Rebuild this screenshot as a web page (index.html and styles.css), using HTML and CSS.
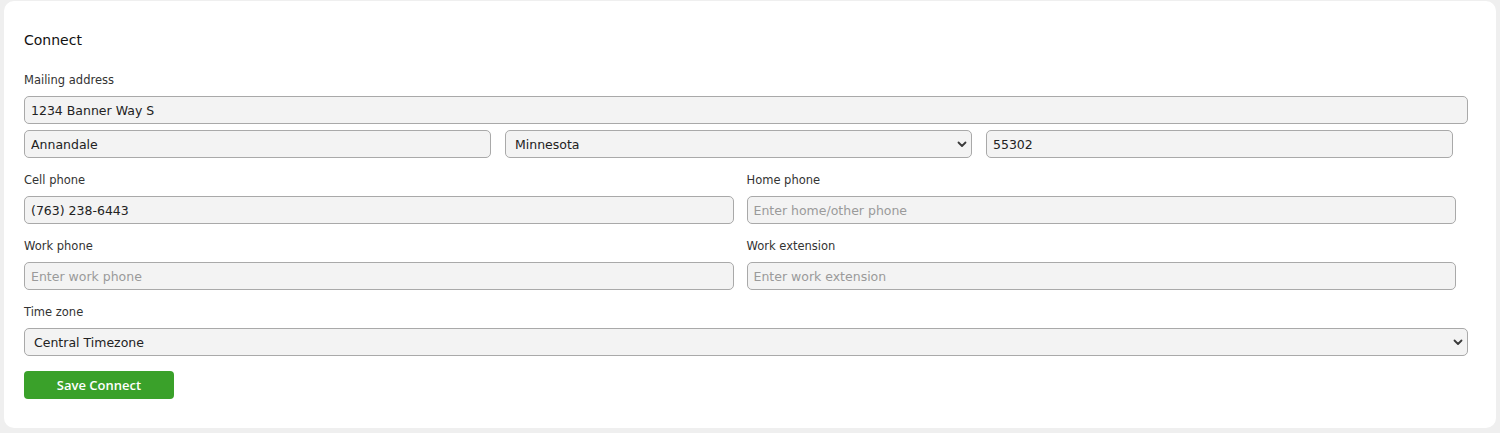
FILE: index.html
```html
<!DOCTYPE html>
<html>
<head>
<meta charset="utf-8">
<link rel="stylesheet" href="styles.css">
</head>
<body>
<div class="page">
  <section class="card">
    <h2 class="title">Connect</h2>
    <div class="field">
      <label class="label">Mailing address</label>
      <input class="control full" type="text" value="1234 Banner Way S">
      <div class="row three">
        <input class="control" type="text" value="Annandale">
        <div class="select-wrap">
          <select class="control select"><option>Minnesota</option></select>
          <svg class="chev" width="10" height="7" viewBox="0 0 10 7"><path d="M1.5 1.5 L5 5 L8.5 1.5" fill="none" stroke="#3a3a3a" stroke-width="1.8" stroke-linecap="round" stroke-linejoin="round"/></svg>
        </div>
        <input class="control" type="text" value="55302">
      </div>
    </div>
    <div class="row two">
      <div class="field">
        <label class="label">Cell phone</label>
        <input class="control" type="text" value="(763) 238-6443">
      </div>
      <div class="field">
        <label class="label">Home phone</label>
        <input class="control" type="text" placeholder="Enter home/other phone">
      </div>
    </div>
    <div class="row two">
      <div class="field">
        <label class="label">Work phone</label>
        <input class="control" type="text" placeholder="Enter work phone">
      </div>
      <div class="field">
        <label class="label">Work extension</label>
        <input class="control" type="text" placeholder="Enter work extension">
      </div>
    </div>
    <div class="field">
      <label class="label">Time zone</label>
      <div class="select-wrap full">
        <select class="control select"><option>Central Timezone</option></select>
        <svg class="chev" width="10" height="7" viewBox="0 0 10 7"><path d="M1.5 1.5 L5 5 L8.5 1.5" fill="none" stroke="#3a3a3a" stroke-width="1.8" stroke-linecap="round" stroke-linejoin="round"/></svg>
      </div>
    </div>
    <button class="btn" type="button">Save Connect</button>
  </section>
</div>
</body>
</html>
```

FILE: styles.css
```css
* { box-sizing: border-box; }
html, body {
  margin: 0;
  padding: 0;
  background: #efefef;
}
body {
  font-family: "DejaVu Sans", "Open Sans", sans-serif;
  color: #222;
}
.page {
  padding: 1px 4px 0 4px;
}
.card {
  background: #fff;
  border-radius: 10px;
  padding: 29px 28px 29px 20px;
  display: flex;
  flex-direction: column;
}
.title {
  margin: 0 0 22px 0;
  font-size: 14px;
  line-height: 20px;
  font-weight: normal;
  color: #111;
}
.field {
  display: flex;
  flex-direction: column;
}
.label {
  font-size: 11.5px;
  line-height: 16px;
  color: #333;
  margin-bottom: 8px;
}
.control {
  display: block;
  width: 100%;
  height: 28px;
  border: 1px solid #a9a9a9;
  border-radius: 5px;
  background: #f3f3f3;
  font-family: inherit;
  font-size: 12.5px;
  color: #222;
  padding: 0 6px;
  outline: none;
}
.control::placeholder {
  color: #9a9a9a;
}
.row {
  display: grid;
}
.row.three {
  grid-template-columns: 1fr 1fr 1fr;
  column-gap: 14px;
  margin-top: 6px;
  margin-right: 15px;
}
.row.two {
  grid-template-columns: 1fr 1fr;
  column-gap: 13px;
  margin-top: 14px;
  margin-right: 12px;
}
.row.two + .row.two { margin-top: 14px; }
.row.two + .field { margin-top: 14px; }
.select-wrap {
  position: relative;
}
.select {
  appearance: none;
  -webkit-appearance: none;
  padding: 0 24px 0 9px;
}
.chev {
  position: absolute;
  right: 5px;
  top: 11px;
  pointer-events: none;
}
.btn {
  margin-top: 15px;
  width: 150px;
  height: 28px;
  border: none;
  border-radius: 4px;
  background: #3aa12a;
  color: #fff;
  font-family: "Open Sans", "DejaVu Sans", sans-serif;
  font-size: 13px;
  font-weight: 600;
  cursor: pointer;
}
```
